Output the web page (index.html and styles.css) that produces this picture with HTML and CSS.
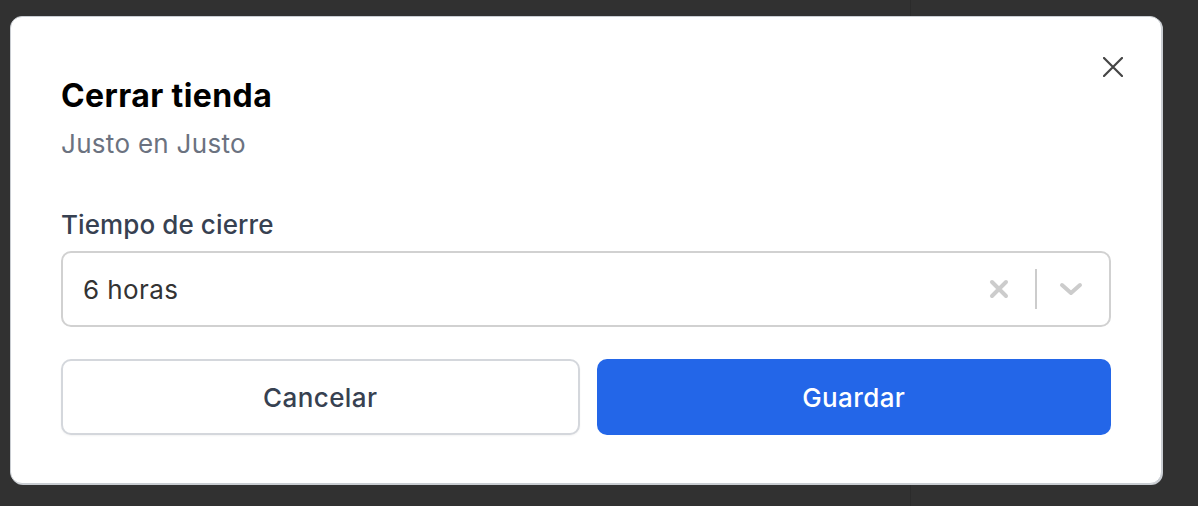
FILE: index.html
```html
<!DOCTYPE html>
<html lang="es">
<head>
<meta charset="utf-8">
<link rel="stylesheet" href="styles.css">
</head>
<body>
<div class="backdrop">
  <div class="main-area"></div>
  <div class="side-area"></div>
</div>
<div class="modal">
  <button class="close" aria-label="Cerrar">
    <svg width="20" height="20" viewBox="0 0 20 20"><path d="M1 1 L19 19 M19 1 L1 19" stroke="#454545" stroke-width="2.2" stroke-linecap="round" fill="none"/></svg>
  </button>
  <h1 class="title">Cerrar tienda</h1>
  <p class="subtitle">Justo en Justo</p>
  <label class="label">Tiempo de cierre</label>
  <div class="select">
    <span class="value">6 horas</span>
    <div class="indicators">
      <span class="clear">
        <svg width="20" height="20" viewBox="0 0 20 20"><path d="M3 3 L17 17 M17 3 L3 17" stroke="#cccccc" stroke-width="4" stroke-linecap="round" fill="none"/></svg>
      </span>
      <span class="sep"></span>
      <span class="chev">
        <svg width="24" height="16" viewBox="0 0 24 16"><path d="M3 4 L12 12 L21 4" stroke="#cccccc" stroke-width="4" stroke-linecap="round" stroke-linejoin="round" fill="none"/></svg>
      </span>
    </div>
  </div>
  <div class="actions">
    <button class="btn btn-cancel">Cancelar</button>
    <button class="btn btn-save">Guardar</button>
  </div>
</div>
</body>
</html>
```

FILE: styles.css
```css
* { box-sizing: border-box; }
html, body { margin: 0; padding: 0; }
body {
  width: 1198px;
  height: 506px;
  background: #313131;
  font-family: Inter, "Noto Sans", sans-serif;
  overflow: hidden;
  position: relative;
}
.backdrop { display: flex; height: 506px; }
.main-area { width: 911px; border-right: 1px solid #2b2b2b; }
.side-area { flex: 1; }

.modal {
  position: absolute;
  left: 10px;
  top: 16px;
  width: 1152px;
  height: 468px;
  background: #ffffff;
  border-radius: 12px;
  border: 1px solid #c9cdd2;
  box-shadow: 1px 1px 0 #c9cdd2;
  padding: 59px 50px 0 50px;
  display: flex;
  flex-direction: column;
}
.close {
  position: absolute;
  top: 40px;
  right: 38px;
  width: 20px;
  height: 20px;
  padding: 0;
  border: 0;
  background: none;
  display: flex;
}
.title {
  margin: 0;
  font-size: 32px;
  line-height: 40px;
  font-weight: 700;
  color: #000;
  letter-spacing: 0.4px;
}
.subtitle {
  margin: 12px 0 0;
  font-size: 26px;
  line-height: 32px;
  color: #6b7280;
  font-weight: 400;
  letter-spacing: 0.3px;
}
.label {
  margin-top: 49px;
  font-size: 26px;
  line-height: 32px;
  font-weight: 500;
  color: #374151;
  letter-spacing: 0.1px;
}
.select {
  margin-top: 10px;
  height: 76px;
  border: 2px solid #d1d1d1;
  border-radius: 10px;
  display: flex;
  align-items: center;
  padding-left: 20px;
}
.value {
  flex: 1;
  font-size: 26px;
  color: #333333;
  letter-spacing: 0.4px;
}
.indicators {
  display: flex;
  align-items: center;
  height: 100%;
  padding-right: 14px;
}
.clear { display: flex; padding: 0 26px 0 16px; }
.sep { width: 2px; height: 40px; background: #cccccc; }
.chev { display: flex; padding: 0 12px 0 22px; }

.actions {
  margin-top: 32px;
  display: flex;
  gap: 17px;
}
.btn {
  flex: 1 1 0;
  min-width: 0;
  height: 76px;
  border-radius: 10px;
  font-family: inherit;
  font-size: 26px;
  font-weight: 500;
  letter-spacing: 0.4px;
}
.btn-cancel {
  background: #fff;
  border: 2px solid #d4d7dc;
  color: #374151;
  box-shadow: 0 1px 2px rgba(0,0,0,0.05);
}
.btn-save {
  background: #2366e8;
  border: 0;
  color: #ffffff;
}
```
